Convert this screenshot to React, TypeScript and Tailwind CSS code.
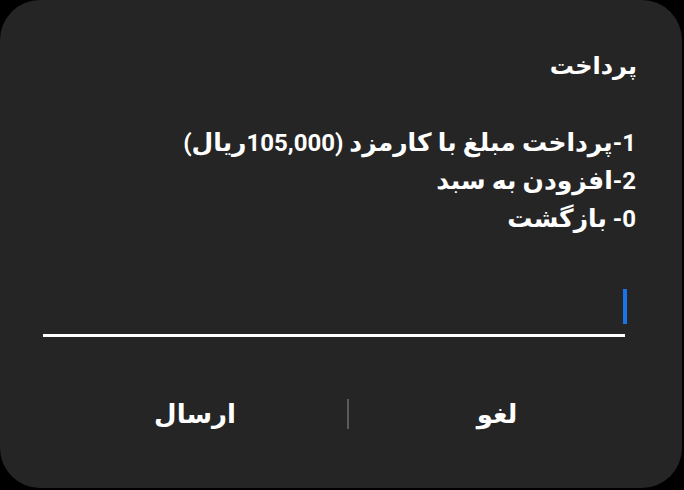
export default function App() {
  return (
    <div className="w-[684px] h-[490px] bg-black">
      <div
        dir="rtl"
        className="w-[682px] h-[488px] bg-[#252525] rounded-[40px] flex flex-col text-white font-['Roboto','DejaVu_Sans',sans-serif]"
      >
        <div className="pt-[50px] pr-[45px] text-[24px] font-bold leading-[32px]">پرداخت</div>
        <div className="pt-[42px] pr-[46px] text-[24px] font-bold leading-[38px]">
          <div>
            1-<span className="text-[25px]">پرداخت مبلغ با کارمزد</span> (105,000<span className="text-[25px]">ریال</span>)
          </div>
          <div>
            2-<span className="text-[25px]">افزودن به سبد</span>
          </div>
          <div>
            0- <span className="text-[25px]">بازگشت</span>
          </div>
        </div>
        <div className="mt-[51px] mr-[57px] ml-[43px] h-[48px] border-b-[3px] border-white flex items-start">
          <div className="mr-[-2px] w-[4px] h-[35px] bg-[#1a73e8]" />
        </div>
        <div className="mt-[57px] flex items-center h-[40px] text-[26px] font-bold">
          <div className="w-[333px] text-center pr-[37px]">لغو</div>
          <div className="w-[2px] h-[30px] bg-[#5a5a5a]" />
          <div className="w-[347px] text-center pl-[43px]">ارسال</div>
        </div>
      </div>
    </div>
  );
}
